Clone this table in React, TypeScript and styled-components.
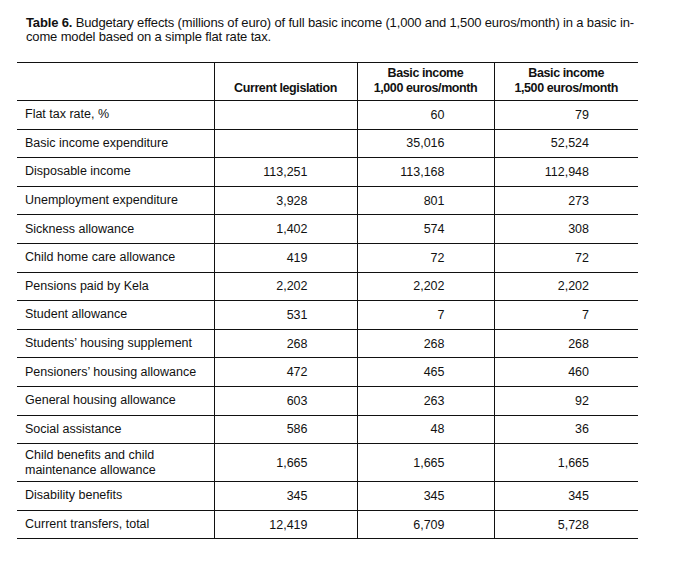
import React from 'react';
import styled, { createGlobalStyle } from 'styled-components';

const GlobalStyle = createGlobalStyle`
    html, body {
        margin: 0;
        padding: 0;
        background: #ffffff;
    }
    body {
        font-family: 'Liberation Sans', Arial, sans-serif;
        color: #111111;
    }
`;

const Page = styled.div`
    width: 678px;
    height: 563px;
    padding: 16px 0 0 17px;
    box-sizing: border-box;
`;

const Caption = styled.p`
    margin: 0 0 18px 9px;
    font-size: 13px;
    line-height: 14px;
    white-space: nowrap;
    letter-spacing: -0.15px;
    b {
        font-weight: 700;
    }
`;

const Table = styled.table`
    border-collapse: collapse;
    width: 621px;
    table-layout: fixed;
    font-size: 12.5px;
`;

const HeadCell = styled.th<{ $width: number }>`
    width: ${(p) => p.$width}px;
    height: 38px;
    padding: 0 0 4px;
    box-sizing: border-box;
    vertical-align: bottom;
    text-align: center;
    font-weight: 700;
    font-size: 12.5px;
    line-height: 15px;
    letter-spacing: -0.4px;
    border-top: 1px solid #111;
    border-bottom: 1px solid #111;
    & + & {
        border-left: 1px solid #111;
    }
`;

const Row = styled.tr<{ $tall?: boolean }>`
    height: ${(p) => (p.$tall ? 38 : 28.6)}px;
`;

const Label = styled.td`
    padding: 0 8px;
    line-height: 15px;
    text-align: left;
    vertical-align: middle;
    border-bottom: 1px solid #111;
`;

const Value = styled.td`
    padding: 0 49px 0 0;
    text-align: right;
    vertical-align: middle;
    border-bottom: 1px solid #111;
    border-left: 1px solid #111;
`;

type Line = [React.ReactNode, string, string, string, boolean?];

const rows: Line[] = [
    ['Flat tax rate, %', '', '60', '79'],
    ['Basic income expenditure', '', '35,016', '52,524'],
    ['Disposable income', '113,251', '113,168', '112,948'],
    ['Unemployment expenditure', '3,928', '801', '273'],
    ['Sickness allowance', '1,402', '574', '308'],
    ['Child home care allowance', '419', '72', '72'],
    ['Pensions paid by Kela', '2,202', '2,202', '2,202'],
    ['Student allowance', '531', '7', '7'],
    ['Students’ housing supplement', '268', '268', '268'],
    ['Pensioners’ housing allowance', '472', '465', '460'],
    ['General housing allowance', '603', '263', '92'],
    ['Social assistance', '586', '48', '36'],
    [
        <>
            Child benefits and child
            <br />
            maintenance allowance
        </>,
        '1,665',
        '1,665',
        '1,665',
        true,
    ],
    ['Disability benefits', '345', '345', '345'],
    ['Current transfers, total', '12,419', '6,709', '5,728'],
];

const App = () => (
    <Page>
        <GlobalStyle />
        <Caption>
            <b>Table 6.</b> Budgetary effects (millions of euro) of full basic income (1,000 and 1,500
            euros/month) in a basic in-
            <br />
            come model based on a simple flat rate tax.
        </Caption>
        <Table>
            <thead>
                <tr>
                    <HeadCell $width={197} />
                    <HeadCell $width={143}>Current legislation</HeadCell>
                    <HeadCell $width={137}>
                        Basic income
                        <br />
                        1,000 euros/month
                    </HeadCell>
                    <HeadCell $width={144}>
                        Basic income
                        <br />
                        1,500 euros/month
                    </HeadCell>
                </tr>
            </thead>
            <tbody>
                {rows.map(([label, a, b, c, tall], i) => (
                    <Row key={i} $tall={tall}>
                        <Label>{label}</Label>
                        <Value>{a}</Value>
                        <Value>{b}</Value>
                        <Value>{c}</Value>
                    </Row>
                ))}
            </tbody>
        </Table>
    </Page>
);

export default App;
